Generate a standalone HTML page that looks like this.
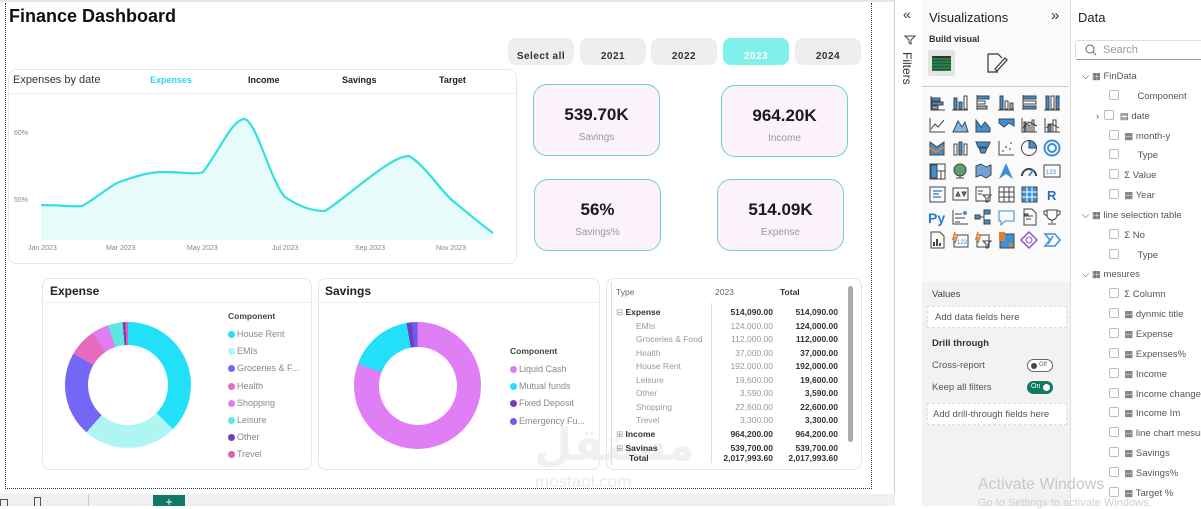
<!DOCTYPE html>
<html><head><meta charset="utf-8">
<style>
*{margin:0;padding:0;box-sizing:border-box}
body{width:1201px;height:506px;overflow:hidden;background:#fff;font-family:"Liberation Sans","DejaVu Sans",sans-serif;position:relative;color:#222}
.a{position:absolute;white-space:nowrap}
.card{position:absolute;border:1px solid #e6e6e6;border-radius:8px;background:#fff}
.btn{position:absolute;top:38px;height:27px;width:66px;border-radius:8px;background:#efeeee;font-size:10px;font-weight:bold;text-align:center;padding-top:13px;color:#333;letter-spacing:.5px}
.kpi{position:absolute;width:127px;height:72px;border:1px solid #6fcfcf;border-radius:14px;background:#fcf2f9;text-align:center}
.kpi b{display:block;font-size:17px;margin-top:20px;color:#1a1a1a}
.kpi span{display:block;font-size:10px;color:#999;margin-top:7px}
.lg{font-size:9px;color:#888}
.lg i{display:inline-block;width:7px;height:7px;border-radius:50%;margin-right:2px;vertical-align:-1px}
.mt{font-size:8.5px;color:#333}
.g{color:#999}
.dr{font-size:9.5px;color:#555}
.cb{display:inline-block;width:10px;height:10px;border:1px solid #bbb;border-radius:2px;vertical-align:-1px}
</style></head><body>
<div class="a" style="left:0;top:0;width:895px;height:2px;background:#e6e6e6"></div>
<div class="a" style="left:5px;top:3px;width:867px;height:486px;border:1px dotted #333;border-top:none"></div>
<div class="a" style="left:894px;top:0;width:1px;height:494px;background:#cfcfcf"></div>
<div class="a" style="left:9px;top:6px;font-size:18px;font-weight:bold;color:#111">Finance Dashboard</div>

<div class="btn" style="left:508px">Select all</div>
<div class="btn" style="left:580px">2021</div>
<div class="btn" style="left:651px">2022</div>
<div class="btn" style="left:723px;background:#7ff1ea;color:#fff">2023</div>
<div class="btn" style="left:795px">2024</div>

<div class="card" style="left:8px;top:69px;width:509px;height:195px"></div>
<div class="a" style="left:9px;top:93px;width:507px;height:1px;background:#eee"></div>
<div class="a" style="left:13px;top:74px;font-size:11px;color:#333">Expenses by date</div>
<div class="a" style="left:150px;top:75px;font-size:9px;font-weight:bold;color:#2ad8f0">Expenses</div>
<div class="a" style="left:248px;top:75px;font-size:9px;font-weight:bold">Income</div>
<div class="a" style="left:342px;top:75px;font-size:9px;font-weight:bold">Savings</div>
<div class="a" style="left:439px;top:75px;font-size:9px;font-weight:bold">Target</div>
<svg class="a" style="left:0;top:0" width="520" height="265">
<path d="M41,205 C60,205 70,207 82,206 C100,196 110,185 122,181 C140,175 150,172 164,172 C185,172 195,175 203,172 C220,150 232,119 245,119 C258,125 270,180 285,197 C300,207 312,211 325,211 C350,195 390,156 409,156 C425,165 440,190 453,201 C470,215 482,225 493,233 L493,240 L41,240 Z" fill="#e6fbfa"/>
<path d="M41,205 C60,205 70,207 82,206 C100,196 110,185 122,181 C140,175 150,172 164,172 C185,172 195,175 203,172 C220,150 232,119 245,119 C258,125 270,180 285,197 C300,207 312,211 325,211 C350,195 390,156 409,156 C425,165 440,190 453,201 C470,215 482,225 493,233" fill="none" stroke="#33e0e0" stroke-width="2.2"/>
<g font-size="7" fill="#888" font-family="Liberation Sans,sans-serif">
<text x="14" y="135">60%</text><text x="14" y="202">55%</text>
<text x="28" y="250">Jan 2023</text><text x="106" y="250">Mar 2023</text><text x="187" y="250">May 2023</text><text x="272" y="250">Jul 2023</text><text x="355" y="250">Sep 2023</text><text x="436" y="250">Nov 2023</text>
</g></svg>

<div class="kpi" style="left:533px;top:84px"><b>539.70K</b><span>Savings</span></div>
<div class="kpi" style="left:721px;top:85px"><b>964.20K</b><span>Income</span></div>
<div class="kpi" style="left:534px;top:179px"><b>56%</b><span>Savings%</span></div>
<div class="kpi" style="left:717px;top:179px"><b>514.09K</b><span>Expense</span></div>

<div class="card" style="left:42px;top:278px;width:270px;height:192px"></div>
<div class="a" style="left:43px;top:302px;width:268px;height:1px;background:#eee"></div>
<div class="a" style="left:50px;top:284px;font-size:12px;font-weight:bold">Expense</div>
<div class="a" style="left:65px;top:322px;width:126px;height:126px;border-radius:50%;background:conic-gradient(#22e0f8 0 134.5deg,#aff5f2 134.5deg 221.3deg,#7367f5 221.3deg 299.7deg,#e46bbd 299.7deg 325.6deg,#e07ef0 325.6deg 341.4deg,#5ee6e0 341.4deg 355.1deg,#7040c0 355.1deg 357.6deg,#e060b0 357.6deg 360deg)"></div>
<div class="a" style="left:88px;top:345px;width:80px;height:80px;border-radius:50%;background:#fff"></div>
<div class="a" style="left:228px;top:311px;font-size:8.5px;font-weight:bold;color:#444">Component</div>
<div class="a lg" style="left:228px;top:326px;line-height:17.2px">
<div><i style="background:#22e0f8"></i>House Rent</div><div><i style="background:#aff5f2"></i>EMIs</div><div><i style="background:#7367f5"></i>Groceries &amp; F...</div><div><i style="background:#e46bbd"></i>Health</div><div><i style="background:#e07ef0"></i>Shopping</div><div><i style="background:#5ee6e0"></i>Leisure</div><div><i style="background:#7040c0"></i>Other</div><div><i style="background:#e060b0"></i>Trevel</div></div>

<div class="card" style="left:318px;top:278px;width:282px;height:192px"></div>
<div class="a" style="left:319px;top:302px;width:280px;height:1px;background:#eee"></div>
<div class="a" style="left:325px;top:284px;font-size:12px;font-weight:bold">Savings</div>
<div class="a" style="left:354px;top:322px;width:127px;height:127px;border-radius:50%;background:conic-gradient(#e07ef6 0 290deg,#22e0f8 290deg 350deg,#7040c0 350deg 355deg,#6c5ff0 355deg 360deg)"></div>
<div class="a" style="left:379px;top:347px;width:78px;height:78px;border-radius:50%;background:#fff"></div>
<div class="a" style="left:510px;top:346px;font-size:8.5px;font-weight:bold;color:#444">Component</div>
<div class="a lg" style="left:510px;top:361px;line-height:17.2px">
<div><i style="background:#e07ef6"></i>Liquid Cash</div><div><i style="background:#22e0f8"></i>Mutual funds</div><div><i style="background:#7040c0"></i>Fixed Deposit</div><div><i style="background:#6c5ff0"></i>Emergency Fu...</div></div>

<div class="a" style="left:534px;top:420px;font-size:44px;font-weight:bold;color:#f0f0f0;font-family:'DejaVu Sans',sans-serif">مستقل</div>
<div class="a" style="left:535px;top:472px;font-size:17px;color:#ebebeb">mostaql.com</div>

<div class="card" style="left:606px;top:278px;width:256px;height:192px;background:transparent"></div>
<div class="a" style="left:848px;top:286px;width:5px;height:156px;background:#aaa;border-radius:3px"></div>
<div class="a" style="left:611px;top:282px;width:1px;height:184px;background:#ddd"></div>
<div class="a" style="left:711px;top:303px;width:1px;height:160px;background:#ddd"></div>
<div class="a mt" style="left:616px;top:287px;color:#666">Type</div>
<div class="a mt" style="left:715px;top:287px;color:#666">2023</div>
<div class="a mt" style="left:780px;top:287px;font-weight:bold">Total</div>
<div class="a mt" style="left:616px;top:306px;line-height:13.5px">
<div><span class="g">⊟</span> <b>Expense</b></div>
<div class="g" style="padding-left:20px">EMIs</div><div class="g" style="padding-left:20px">Groceries &amp; Food</div><div class="g" style="padding-left:20px">Health</div><div class="g" style="padding-left:20px">House Rent</div><div class="g" style="padding-left:20px">Leisure</div><div class="g" style="padding-left:20px">Other</div><div class="g" style="padding-left:20px">Shopping</div><div class="g" style="padding-left:20px">Trevel</div>
<div><span class="g">⊞</span> <b>Income</b></div>
<div style="line-height:10px;margin-top:2px"><span class="g">⊞</span> <b>Savinas</b></div>
<div style="line-height:10px;padding-left:13px;font-weight:bold">Total</div></div>
<div class="a mt" style="left:700px;top:306px;width:73px;text-align:right;line-height:13.5px">
<div><b>514,090.00</b></div><div class="g">124,000.00</div><div class="g">112,000.00</div><div class="g">37,000.00</div><div class="g">192,000.00</div><div class="g">19,600.00</div><div class="g">3,590.00</div><div class="g">22,600.00</div><div class="g">3,300.00</div><div><b>964,200.00</b></div><div style="line-height:10px;margin-top:2px"><b>539,700.00</b></div><div style="line-height:10px"><b>2,017,993.60</b></div></div>
<div class="a mt" style="left:770px;top:306px;width:68px;text-align:right;line-height:13.5px;font-weight:bold">
<div>514,090.00</div><div>124,000.00</div><div>112,000.00</div><div>37,000.00</div><div>192,000.00</div><div>19,600.00</div><div>3,590.00</div><div>22,600.00</div><div>3,300.00</div><div>964,200.00</div><div style="line-height:10px;margin-top:2px">539,700.00</div><div style="line-height:10px">2,017,993.60</div></div>

<div class="a" style="left:0;top:494px;width:922px;height:12px;background:#f0f0f0"></div>
<div class="a" style="left:0;top:499px;width:8px;height:7px;border:1px solid #555;border-bottom:none"></div>
<div class="a" style="left:34px;top:497px;width:7px;height:9px;border:1px solid #555;border-bottom:none"></div>
<div class="a" style="left:88px;top:494px;width:1px;height:12px;background:#ccc"></div>
<div class="a" style="left:153px;top:495px;width:32px;height:11px;background:#117865;color:#fff;font-size:12px;text-align:center;line-height:14px">+</div>

<div class="a" style="left:895px;top:0;width:27px;height:506px;background:#fff"></div>
<div class="a" style="left:903px;top:6px;font-size:14px;color:#333">«</div>
<svg class="a" style="left:904px;top:35px" width="12" height="10"><path d="M1,1 L11,1 L7,5 L7,9 L5,8 L5,5 Z" fill="none" stroke="#444"/></svg>
<div class="a" style="top:52px;font-size:12px;color:#333;transform-origin:0 0;transform:rotate(90deg);left:914px">Filters</div>

<div class="a" style="left:922px;top:0;width:149px;height:506px;background:#f3f2f1"></div>
<div class="a" style="left:922px;top:0;width:149px;height:282px;background:#fafafa"></div>
<div class="a" style="left:1070px;top:0;width:1px;height:506px;background:#e1e1e1"></div>
<div class="a" style="left:929px;top:10px;font-size:13px;color:#222">Visualizations</div>
<div class="a" style="left:1051px;top:7px;font-size:15px;color:#333">»</div>
<div class="a" style="left:929px;top:34px;font-size:9px;font-weight:bold;color:#333">Build visual</div>
<div class="a" style="left:928px;top:50px;width:27px;height:26px;background:#e4e4e4;border-radius:2px"></div>
<div class="a" style="left:932px;top:56px;width:19px;height:15px;background:repeating-linear-gradient(#2a7a4a 0 2px,#1b5e3a 2px 3px);border-top:2px solid #333"></div>
<svg class="a" style="left:985px;top:52px" width="24" height="22"><path d="M3,2 L13,2 L17,6 M3,2 L3,20 L13,20 M10,17 L20,6 L22,8 L12,19 Z" fill="none" stroke="#333" stroke-width="1.2"/></svg>
<div class="a" style="left:922px;top:86px;width:147px;height:1px;background:#ccc"></div>
<svg class="a" style="left:928px;top:93px" width="135" height="160">
<g fill="none" stroke="#444" stroke-width="1">
<g><path d="M3,3 V17 H17"/><rect x="4" y="5" width="8" height="3" fill="#3d8fd6"/><rect x="4" y="9" width="11" height="3" fill="#3d8fd6"/><rect x="4" y="13" width="6" height="3" fill="#aaa"/></g>
<g transform="translate(23,0)"><path d="M1,17 H17"/><rect x="3" y="5" width="3" height="11" fill="#3d8fd6"/><rect x="8" y="9" width="3" height="7" fill="#3d8fd6"/><rect x="13" y="3" width="3" height="13"/></g>
<g transform="translate(46,0)"><path d="M3,2 V17"/><rect x="3" y="3" width="12" height="3" fill="#3d8fd6"/><rect x="3" y="8" width="8" height="3"/><rect x="3" y="13" width="10" height="3" fill="#aaa"/></g>
<g transform="translate(69,0)"><path d="M1,17 H17"/><rect x="3" y="3" width="3" height="13" fill="#3d8fd6"/><rect x="8" y="8" width="3" height="8"/><rect x="13" y="10" width="3" height="6" fill="#aaa"/></g>
<g transform="translate(92,0)"><path d="M3,2 V17"/><rect x="3" y="3" width="13" height="3" fill="#3d8fd6"/><rect x="3" y="8" width="13" height="3"/><rect x="3" y="13" width="13" height="3" fill="#3d8fd6"/></g>
<g transform="translate(115,0)"><path d="M1,17 H17"/><rect x="3" y="3" width="3" height="13" fill="#3d8fd6"/><rect x="8" y="3" width="3" height="13"/><rect x="13" y="3" width="3" height="13" fill="#3d8fd6"/></g>
<g transform="translate(0,23)"><path d="M2,2 V16 H17 M3,13 L7,8 L10,11 L16,4" /></g>
<g transform="translate(23,23)"><path d="M2,16 L7,5 L11,11 L14,6 L17,16 Z" fill="#7fb8e8"/></g>
<g transform="translate(46,23)"><path d="M2,4 L7,11 L11,6 L16,12 V16 H2 Z" fill="#3d8fd6"/></g>
<g transform="translate(69,23)"><path d="M2,3 H17 V10 L12,7 L7,11 L2,7 Z" fill="#3d8fd6"/></g>
<g transform="translate(92,23)"><path d="M2,2 V16 H17"/><rect x="4" y="6" width="2" height="10" fill="#3d8fd6"/><rect x="8" y="9" width="2" height="7"/><rect x="12" y="4" width="2" height="12"/><path d="M3,12 L9,6 L17,10" stroke="#333"/></g>
<g transform="translate(115,23)"><path d="M2,2 V16 H17"/><rect x="5" y="8" width="3" height="8" fill="#3d8fd6"/><rect x="10" y="4" width="3" height="12"/><path d="M3,12 L9,8 L16,12"/></g>
<g transform="translate(0,46)"><path d="M2,3 L9,8 L16,3 V16 H2 Z" fill="#3d8fd6"/><path d="M2,9 L8,13 L16,8" stroke="#e08030" stroke-width="2"/></g>
<g transform="translate(23,46)"><rect x="3" y="5" width="3" height="11"/><rect x="8" y="3" width="3" height="13" fill="#3d8fd6"/><rect x="13" y="5" width="3" height="11"/></g>
<g transform="translate(46,46)"><path d="M2,3 H16 L14,8 H4 Z M5,9 H13 L11,14 H7 Z" fill="#3d8fd6"/></g>
<g transform="translate(69,46)"><path d="M2,2 V16 H17"/><g fill="#3d8fd6" stroke="none"><circle cx="6" cy="12" r="1"/><circle cx="9" cy="8" r="1"/><circle cx="13" cy="10" r="1"/><circle cx="14" cy="4" r="1"/></g></g>
<g transform="translate(92,46)"><circle cx="9" cy="9" r="7.5"/><path d="M9,9 V1.5 A7.5,7.5 0 0 1 16.5,9 Z" fill="#3d8fd6"/></g>
<g transform="translate(115,46)"><circle cx="9" cy="9" r="7.5" stroke="#3d8fd6" stroke-width="2"/><circle cx="9" cy="9" r="4" stroke="#3d8fd6" stroke-width="2"/></g>
<g transform="translate(0,69)"><rect x="2" y="2" width="15" height="15"/><rect x="3" y="3" width="6" height="13" fill="#3d8fd6"/><path d="M9,9 H17 M13,9 V17"/></g>
<g transform="translate(23,69)"><circle cx="9" cy="8" r="6" fill="#5aa06a"/><path d="M5,16 H13 M9,14 V16"/></g>
<g transform="translate(46,69)"><path d="M2,4 L7,2 L12,5 L17,3 V13 L12,16 L7,13 L2,15 Z" fill="#6fa3d8"/></g>
<g transform="translate(69,69)"><path d="M9,1 L16,17 L9,12 L2,17 Z" fill="#3d8fd6" stroke="none"/></g>
<g transform="translate(92,69)"><path d="M2,14 A7,7 0 0 1 16,14" stroke-width="2"/><path d="M9,14 L13,8" stroke="#3d8fd6" stroke-width="2"/></g>
<g transform="translate(115,69)"><rect x="1" y="3" width="16" height="12"/><text x="3" y="12" font-size="6" fill="#3d8fd6" stroke="none">123</text></g>
<g transform="translate(0,92)"><rect x="2" y="2" width="15" height="15"/><path d="M5,6 H14 M5,9 H11 M5,12 H13" stroke="#3d8fd6" stroke-width="1.5"/></g>
<g transform="translate(23,92)"><rect x="2" y="3" width="15" height="12"/><path d="M5,11 L7,7 L9,11 Z" fill="#5a5"/><path d="M11,7 H15 L13,11 Z" fill="#d55"/></g>
<g transform="translate(46,92)"><rect x="2" y="2" width="14" height="14"/><path d="M4,6 H9 M4,9 H8 M9,10 H17 L14,13 V17 H12 V13 Z"/></g>
<g transform="translate(69,92)"><rect x="2" y="2" width="15" height="15"/><path d="M2,7 H17 M2,12 H17 M7,2 V17 M12,2 V17"/></g>
<g transform="translate(92,92)"><rect x="2" y="2" width="15" height="15" fill="#3d8fd6"/><path d="M2,7 H17 M2,12 H17 M7,2 V17 M12,2 V17" stroke="#fff"/></g>
<g transform="translate(115,92)"><text x="4" y="15" font-size="13" font-weight="bold" fill="#2a6fc0" stroke="none" font-family="Liberation Sans">R</text></g>
<g transform="translate(0,115)"><text x="0" y="15" font-size="14" font-weight="bold" fill="#2a7ad8" stroke="none" font-family="Liberation Sans">Py</text></g>
<g transform="translate(23,115)"><path d="M2,2 V16 H17 M4,6 H11 M4,10 H14 M4,14 H9"/><circle cx="14" cy="5" r="2" fill="#3d8fd6" stroke="none"/></g>
<g transform="translate(46,115)"><rect x="1" y="7" width="5" height="4" fill="#3d8fd6"/><path d="M6,9 H10 M10,3 V15"/><rect x="10" y="2" width="6" height="4" fill="#3d8fd6"/><rect x="10" y="12" width="6" height="4" fill="#3d8fd6"/></g>
<g transform="translate(69,115)"><path d="M2,3 H17 V13 H8 L4,17 V13 H2 Z" stroke="#3d8fd6"/></g>
<g transform="translate(92,115)"><path d="M4,1 H12 L16,5 V17 H4 Z M6,8 H13 M6,11 H11"/><rect x="5" y="6" width="3" height="2" fill="#3d8fd6"/></g>
<g transform="translate(115,115)"><path d="M4,2 H14 V7 A5,5 0 0 1 4,7 Z M9,12 V15 M5,16 H13 M4,3 H1 V6 L4,8 M14,3 H17 V6 L14,8"/></g>
<g transform="translate(0,138)"><path d="M3,1 H12 L16,5 V17 H3 Z"/><path d="M6,15 V11 M9,15 V8 M12,15 V12" stroke-width="2"/></g>
<g transform="translate(23,138)"><rect x="3" y="4" width="14" height="12"/><path d="M4,1 L2,8 L6,6 L4,12" stroke="#e08030" stroke-width="1.5"/><text x="6" y="13" font-size="6" fill="#3d8fd6" stroke="none">123</text></g>
<g transform="translate(46,138)"><rect x="3" y="4" width="12" height="12"/><path d="M4,1 L2,8 L6,6 L4,12" stroke="#e08030" stroke-width="1.5"/><path d="M9,10 H17 L14,13 V17 H12 V13 Z"/></g>
<g transform="translate(69,138)"><rect x="3" y="3" width="14" height="14" fill="#3d8fd6"/><rect x="2" y="1" width="6" height="9" fill="#e08030" stroke="none"/><circle cx="14" cy="14" r="2" fill="#e08030" stroke="none"/></g>
<g transform="translate(92,138)"><path d="M9,1 L17,9 L9,17 L1,9 Z" stroke="#9b4fd0" stroke-width="1.5"/><circle cx="9" cy="9" r="3" stroke="#9b4fd0"/></g>
<g transform="translate(115,138)"><path d="M2,3 H12 L17,9 L12,15 H2 L7,9 Z M5,13 L10,5" stroke="#3d8fd6" stroke-width="1.5"/></g>
</g>
<text x="2" y="172" font-size="10" fill="#666">···</text>
</svg>
<div class="a" style="left:932px;top:289px;font-size:9.5px;color:#444">Values</div>
<div class="a" style="left:927px;top:306px;width:140px;height:22px;background:#fff;border:1px dashed #ddd;font-size:9.5px;color:#555;padding:5px 0 0 7px">Add data fields here</div>
<div class="a" style="left:932px;top:338px;font-size:9.5px;font-weight:bold;color:#333">Drill through</div>
<div class="a dr" style="left:932px;top:360px">Cross-report</div>
<div class="a dr" style="left:932px;top:382px">Keep all filters</div>
<div class="a" style="left:1027px;top:359px;width:26px;height:13px;border:1px solid #666;border-radius:7px;background:#fff"><div class="a" style="left:3px;top:2.5px;width:6px;height:6px;border-radius:50%;background:#444"></div><div class="a" style="left:11px;top:2px;font-size:6px;color:#666">Off</div></div>
<div class="a" style="left:1027px;top:381px;width:26px;height:13px;border-radius:7px;background:#117865"><div class="a" style="left:4px;top:2px;font-size:7px;color:#fff">On</div><div class="a" style="left:16px;top:3px;width:7px;height:7px;border-radius:50%;background:#fff"></div></div>
<div class="a" style="left:927px;top:403px;width:140px;height:22px;background:#fff;border:1px dashed #ddd;font-size:9.5px;color:#555;padding:5px 0 0 5px">Add drill-through fields here</div>

<div class="a" style="left:1078px;top:10px;font-size:13px;color:#222">Data</div>
<div class="a" style="left:1075px;top:40px;width:130px;height:20px;border:1px solid #ddd;border-bottom:1px solid #999;border-radius:3px;font-size:11px;color:#999;padding:3px 0 0 27px">Search</div>
<svg class="a" style="left:1085px;top:44px" width="12" height="12"><circle cx="5" cy="5" r="4" fill="none" stroke="#666"/><path d="M8,8 L11,11" stroke="#666"/></svg>
<div class="a" style="left:1082px;top:67px;font-size:9.5px;color:#555;line-height:19.85px">
<div>⌵ ▦ FinData</div>
<div style="padding-left:27px"><span class="cb"></span>&nbsp;&nbsp;&nbsp;&nbsp;&nbsp;&nbsp;&nbsp;Component</div>
<div style="padding-left:14px">›&nbsp;&nbsp;<span class="cb"></span>&nbsp;&nbsp;▤ date</div>
<div style="padding-left:27px"><span class="cb"></span>&nbsp;&nbsp;▦ month-y</div>
<div style="padding-left:27px"><span class="cb"></span>&nbsp;&nbsp;&nbsp;&nbsp;&nbsp;&nbsp;&nbsp;Type</div>
<div style="padding-left:27px"><span class="cb"></span>&nbsp;&nbsp;Σ Value</div>
<div style="padding-left:27px"><span class="cb"></span>&nbsp;&nbsp;▦ Year</div>
<div>⌵ ▦ line selection table</div>
<div style="padding-left:27px"><span class="cb"></span>&nbsp;&nbsp;Σ No</div>
<div style="padding-left:27px"><span class="cb"></span>&nbsp;&nbsp;&nbsp;&nbsp;&nbsp;&nbsp;&nbsp;Type</div>
<div>⌵ ▦ mesures</div>
<div style="padding-left:27px"><span class="cb"></span>&nbsp;&nbsp;Σ Column</div>
<div style="padding-left:27px"><span class="cb"></span>&nbsp;&nbsp;▦ dynmic title</div>
<div style="padding-left:27px"><span class="cb"></span>&nbsp;&nbsp;▦ Expense</div>
<div style="padding-left:27px"><span class="cb"></span>&nbsp;&nbsp;▦ Expenses%</div>
<div style="padding-left:27px"><span class="cb"></span>&nbsp;&nbsp;▦ Income</div>
<div style="padding-left:27px"><span class="cb"></span>&nbsp;&nbsp;▦ Income change</div>
<div style="padding-left:27px"><span class="cb"></span>&nbsp;&nbsp;▦ Income Im</div>
<div style="padding-left:27px"><span class="cb"></span>&nbsp;&nbsp;▦ line chart mesure</div>
<div style="padding-left:27px"><span class="cb"></span>&nbsp;&nbsp;▦ Savings</div>
<div style="padding-left:27px"><span class="cb"></span>&nbsp;&nbsp;▦ Savings%</div>
<div style="padding-left:27px"><span class="cb"></span>&nbsp;&nbsp;▦ Target %</div>
</div>
<div class="a" style="left:978px;top:476px;font-size:16px;color:#c8c8c8">Activate Windows</div>
<div class="a" style="left:978px;top:497px;font-size:11px;color:#d0d0d0">Go to Settings to activate Windows.</div>
</body></html>
